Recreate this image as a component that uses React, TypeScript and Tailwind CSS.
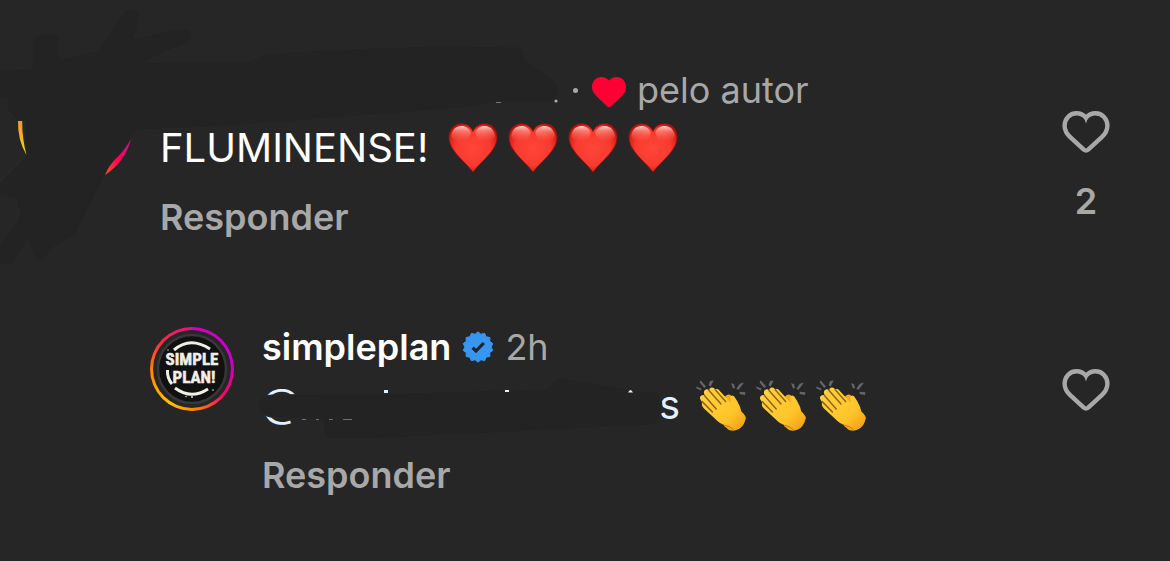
import React from "react";

function OutlineHeart() {
  return (
    <svg viewBox="0 0 48 42" className="block h-[42px] w-12" fill="none" stroke="#a8a8a8" strokeWidth="4.4" strokeLinejoin="round" aria-hidden="true">
      <path d="M24 6.8C21.5 3.8 18.2 2.3 14.5 2.3C7.6 2.3 2.6 7.8 2.6 14.8C2.6 19.2 4.6 22.8 8.2 26.2L21.8 38.6Q24 40.4 26.2 38.6L39.8 26.2C43.4 22.8 45.4 19.2 45.4 14.8C45.4 7.8 40.4 2.3 33.5 2.3C29.8 2.3 26.5 3.8 24 6.8Z" />
      <path d="M21.4 5L24 12.4L26.600 5Z" fill="#a8a8a8" stroke="none" />
    </svg>
  );
}

function SolidHeart() {
  return (
    <svg viewBox="0 -4 34 35" className="block h-[35px] w-[34px]" fill="#ff0034" role="img" aria-label="Curtido">
      <path d="M17 3.6C15 1.3 12.6 0 9.6 0C4.2 0 0 4.2 0 9.8C0 13.6 1.8 16.6 4.8 19.5L15 29.2Q17 31.4 19 29.2L29.2 19.5C32.2 16.6 34 13.6 34 9.8C34 4.2 29.8 0 24.4 0C21.4 0 19 1.3 17 3.6Z" />
    </svg>
  );
}

const heartShape =
  "M25 8.4C22.6 3.2 18.2.8 13.2.8C6 .8 1 6.4 1 14C1 28 16 37 25 49.2C34 37 49 28 49 14C49 6.4 44 .8 36.8.8C31.8.8 27.4 3.2 25 8.4Z";

function RedHeart() {
  return (
    <svg viewBox="0 0 50 50" className="block size-[50px]" role="img" aria-label="Coração vermelho">
      <defs>
        <radialGradient id="heart-body" cx="0.5" cy="0.5" r="0.6">
          <stop offset="0" stopColor="#ff4638" />
          <stop offset="0.6" stopColor="#f83a2f" />
          <stop offset="0.85" stopColor="#dc2119" />
          <stop offset="1" stopColor="#a80f0c" />
        </radialGradient>
        <linearGradient id="heart-gloss" x1="0" y1="0" x2="0" y2="1">
          <stop offset="0" stopColor="#ffd9d2" stopOpacity="0.95" />
          <stop offset="0.35" stopColor="#ff9c90" stopOpacity="0.6" />
          <stop offset="1" stopColor="#ff5a4c" stopOpacity="0" />
        </linearGradient>
      </defs>
      <path d={heartShape} fill="url(#heart-body)" stroke="#9c0f0c" strokeWidth="0.8" />
      <path d="M3.200 13C4 6.400 8 3 13.200 3C18 3 21.400 5.600 22.600 9.500Q22 18 13 19Q5 19 3.200 13Z" fill="url(#heart-gloss)" />
      <path d="M46.800 13C46 6.400 42 3 36.800 3C32 3 28.600 5.600 27.400 9.500Q28 18 37 19Q45 19 46.800 13Z" fill="url(#heart-gloss)" />
    </svg>
  );
}

function ClappingHands() {
  return (
    <svg viewBox="0 0 50 52" className="block h-[52px] w-[50px]" role="img" aria-label="Aplausos">
      <defs>
        <linearGradient id="hand" x1="0" y1="0" x2="1" y2="1">
          <stop offset="0" stopColor="#ffd340" />
          <stop offset="0.65" stopColor="#ffc52a" />
          <stop offset="1" stopColor="#f09a12" />
        </linearGradient>
      </defs>
      <g fill="#646669">
        <path d="M4.600 1.200L10 7.400L8.200 9L3.600 3.600Z" />
        <path d="M0 7.600L5.400 9.400L5 11.400L.6 9.600Z" />
        <path d="M17.600 1.600L14.600 7.400L12.600 6.600L14 2Z" />
        <path d="M35 4L38 5.200L39 9L37 9.400Z" />
        <path d="M48 3.400L42.400 11L40.400 9.800L43.800 4.800Z" />
        <path d="M49.400 13.200L49 16L43.600 15L43.800 12.800Z" />
      </g>
      <path d="M27 21L29.6 17Q31.6 14.6 34.6 16Q38 22 40.6 28L47 34Q50 37 49.6 40L42 50Q38 53 33 51L28 47Z" fill="#f2aa1d" />
      <path d="M5 21.4Q2.8 18.8 5 16.8Q6.8 15.2 9 16.6L8 14.6Q7.4 11.6 9.8 10.6Q11.6 9.8 13.2 11.6Q13 9.2 15.4 8.6Q17.6 8.2 19.2 10.2Q22 9.4 23.4 11.4L34 23Q34.6 24 34.6 21.6L34.2 18Q35.6 15 38.2 17.6Q41.6 22 44.2 28.2L45.4 33.6Q47.8 36.2 49.4 37.8Q50 42.4 46.4 47Q43.2 51 38.6 51.2Q35.6 47.6 30 46.4Q23.6 44.8 18.8 39.4L8 29.6Q4.6 26 6.4 23.6Z" fill="url(#hand)" />
      <g fill="none" stroke="#8f6414" strokeWidth="1.5" strokeLinecap="round">
        <path d="M8.6 16.8L20.2 30" />
        <path d="M13 11.6L25 25" />
        <path d="M19.2 10.8L29.6 22.4" />
        <path d="M6.2 22.6L16.4 33" />
      </g>
      <path d="M28.4 46.2Q34 47 37.8 51" fill="none" stroke="#c77d0c" strokeWidth="1" />
    </svg>
  );
}

function VerifiedBadge() {
  return (
    <svg viewBox="-16 -16 32 32" className="block size-8" role="img" aria-label="Verificado">
      <path
        fill="#3797f0"
        stroke="#3797f0"
        strokeLinejoin="round"
        d="M0-15.200L2.900-12.700L6.600-13.700L8.100-10.200L11.900-9.500L11.700-5.700L14.800-3.400L13-0L14.800 3.400L11.700 5.700L11.900 9.500L8.100 10.200L6.600 13.700L2.900 12.700L0 15.200L-2.900 12.700L-6.600 13.700L-8.100 10.200L-11.900 9.500L-11.700 5.700L-14.800 3.400L-13 0L-14.800-3.400L-11.700-5.700L-11.900-9.500L-8.100-10.200L-6.600-13.700L-2.900-12.700Z"
      />
      <path d="M-5.400.6L-2 4L5.800-4" fill="none" stroke="#202327" strokeWidth="3.200" />
    </svg>
  );
}

function BandAvatar() {
  return (
    <a href="#simpleplan" aria-label="simpleplan" className="block size-[84px] shrink-0 rounded-full bg-[conic-gradient(#d300c5,#c800c8_80deg,#ff0169_130deg,#ff7a00_170deg,#ffc400_215deg,#ff8a00_265deg,#ff2a3c_310deg,#e0108c)] p-[3px]">
      <svg viewBox="0 0 78 78" className="block size-full rounded-full bg-[#262626]">
        <circle cx="39" cy="39" r="34" fill="#101110" stroke="#38383a" strokeWidth="2.4" />
        <g fill="none" stroke="#f1eee6" strokeWidth="3">
          <path d="M21 20Q37 6 57 19" />
          <path d="M22 58Q38 70 55 59" />
          <path d="M14.500 40Q14 48 19 54" />
        </g>
        <g fill="#f1eee6">
          <circle cx="33" cy="66.500" r="0.700" />
          <circle cx="39" cy="67" r="0.900" />
          <circle cx="60" cy="60" r="0.800" />
          <circle cx="15" cy="20" r="0.700" />
        </g>
        <g fill="#f1eee6" stroke="#f1eee6" strokeWidth="0.500" textAnchor="middle" className="font-['Liberation_Sans_Narrow','Roboto_Condensed','Roboto',sans-serif] text-[17px] font-bold">
          <text x="39" y="35">SIMPLE</text>
          <text x="41" y="53">PLAN!</text>
        </g>
      </svg>
    </a>
  );
}

function HeaderScribble() {
  return (
    <svg viewBox="0 0 570 280" className="pointer-events-none absolute left-0 top-0 h-[280px] w-[570px]" aria-hidden="true">
      <defs>
        <linearGradient id="ring-left" x1="0" y1="0" x2="0" y2="1">
          <stop offset="0" stopColor="#f8962c" />
          <stop offset="1" stopColor="#fbd70b" />
        </linearGradient>
        <linearGradient id="ring-right" x1="1" y1="0" x2="0" y2="1">
          <stop offset="0" stopColor="#d90a9c" />
          <stop offset="0.5" stopColor="#f5045a" />
          <stop offset="1" stopColor="#f4511f" />
        </linearGradient>
      </defs>
      <path
        fill="#232323"
        stroke="#282828"
        strokeLinejoin="round"
        d="M-2 70L32 68V42Q33 35 42 35Q54 31 59 36L60 59L98 50L122 14Q130 5 138 11Q142 17 134 38L170 30Q192 26 193 36Q190 45 170 50L145 62H250L262 54Q300 50 430 46L520 47Q526 52 524 58Q529 66 548 74Q559 82 559 94L556 102H497Q480 108 430 111L215 127L138 130L130 140L105 175L90 205L75 235L50 250Q45 261 38 260Q32 258 28 239L12 265H-2V248L20 217L16 199L-2 194V184L25 157V121H18L7 110L8 99H-2Z"
      />
      <path d="M18 121H22.200Q22 138 26.500 155Q17.500 140 18 121Z" fill="url(#ring-left)" />
      <path d="M131 139Q125 162 105 175Q109 165 117 157.500Q125 150 131 139Z" fill="url(#ring-right)" />
      <path d="M496 102.500H501" stroke="#777" />
      <circle cx="556" cy="101" r="1.600" fill="#aaa" />
    </svg>
  );
}

function MentionScribble() {
  return (
    <svg viewBox="0 0 410 70" className="pointer-events-none absolute -left-1 top-0 h-[70px] w-[410px]" aria-hidden="true">
      <path
        fill="#232323"
        stroke="#282828"
        d="M0 37Q0 25 14 25L142 23L287 19L292 15Q298 7 307 8L342 14L382 21H397Q404 24 404 38Q402 52 394 55L302 60L172 66L122 69H72Q63 66 65 50L12 47Q0 44 0 37Z"
      />
      <g fill="#e0f1ff">
        <rect x="126" y="20" width="4" height="3" />
        <rect x="247" y="20" width="4" height="2" />
        <path d="M370 22.500Q372.500 17.500 375 22.500Z" />
      </g>
      <path d="M44 49.500H48M58 49.500H61M71 49.500H75M85 49.500H94" stroke="#6a7075" />
    </svg>
  );
}

function ReplyButton() {
  return (
    <button type="button" className="block text-4xl font-semibold leading-10 text-[#a8a8a8]">
      Responder
    </button>
  );
}

export default function App() {
  return (
    <main className="relative min-h-screen overflow-hidden bg-[#262626] pb-10 pt-[70px] font-['Inter',sans-serif] text-white">
      <article className="flex items-start justify-between pl-40 pr-[60px]">
        <div>
          <div className="flex h-10 items-center pl-[413px] text-4xl leading-10 text-[#a8a8a8]">
            <span className="size-[5px] shrink-0 rounded-full bg-[#a8a8a8]" />
            <span className="ml-[14px] mr-[11px]">
              <SolidHeart />
            </span>
            <span className="whitespace-nowrap">pelo autor</span>
          </div>
          <div className="mt-3 flex h-[52px] items-center gap-5">
            <p className="text-[40px] leading-[52px]">FLUMINENSE!</p>
            <span className="flex gap-[10px]">
              <RedHeart />
              <RedHeart />
              <RedHeart />
              <RedHeart />
            </span>
          </div>
          <div className="mt-[23px]">
            <ReplyButton />
          </div>
        </div>
        <button type="button" aria-label="Curtir, 2 curtidas" className="mt-[41px] flex flex-col items-center gap-7 text-4xl font-semibold leading-10 text-[#a8a8a8]">
          <OutlineHeart />
          2
        </button>
      </article>
      <HeaderScribble />

      <article className="mt-[90px] flex items-start pl-[150px] pr-[60px]">
        <BandAvatar />
        <div className="ml-7 flex-1">
          <div className="flex h-10 items-center gap-[11px] text-4xl leading-10">
            <a href="#simpleplan" className="font-semibold">simpleplan</a>
            <VerifiedBadge />
            <span className="text-[#a8a8a8]">2h</span>
          </div>
          <div className="relative mt-[3px] flex h-[70px] items-center gap-4">
            <p className="flex w-[418px] items-start justify-between text-[40px] leading-[52px] text-[#e0f1ff]">
              <span className="leading-[48px]">@</span>
              <span>s</span>
            </p>
            <MentionScribble />
            <span className="flex gap-[10px]">
              <ClappingHands />
              <ClappingHands />
              <ClappingHands />
            </span>
          </div>
          <div className="mt-[15px]">
            <ReplyButton />
          </div>
        </div>
        <button type="button" aria-label="Curtir" className="mt-[42px]">
          <OutlineHeart />
        </button>
      </article>
    </main>
  );
}
